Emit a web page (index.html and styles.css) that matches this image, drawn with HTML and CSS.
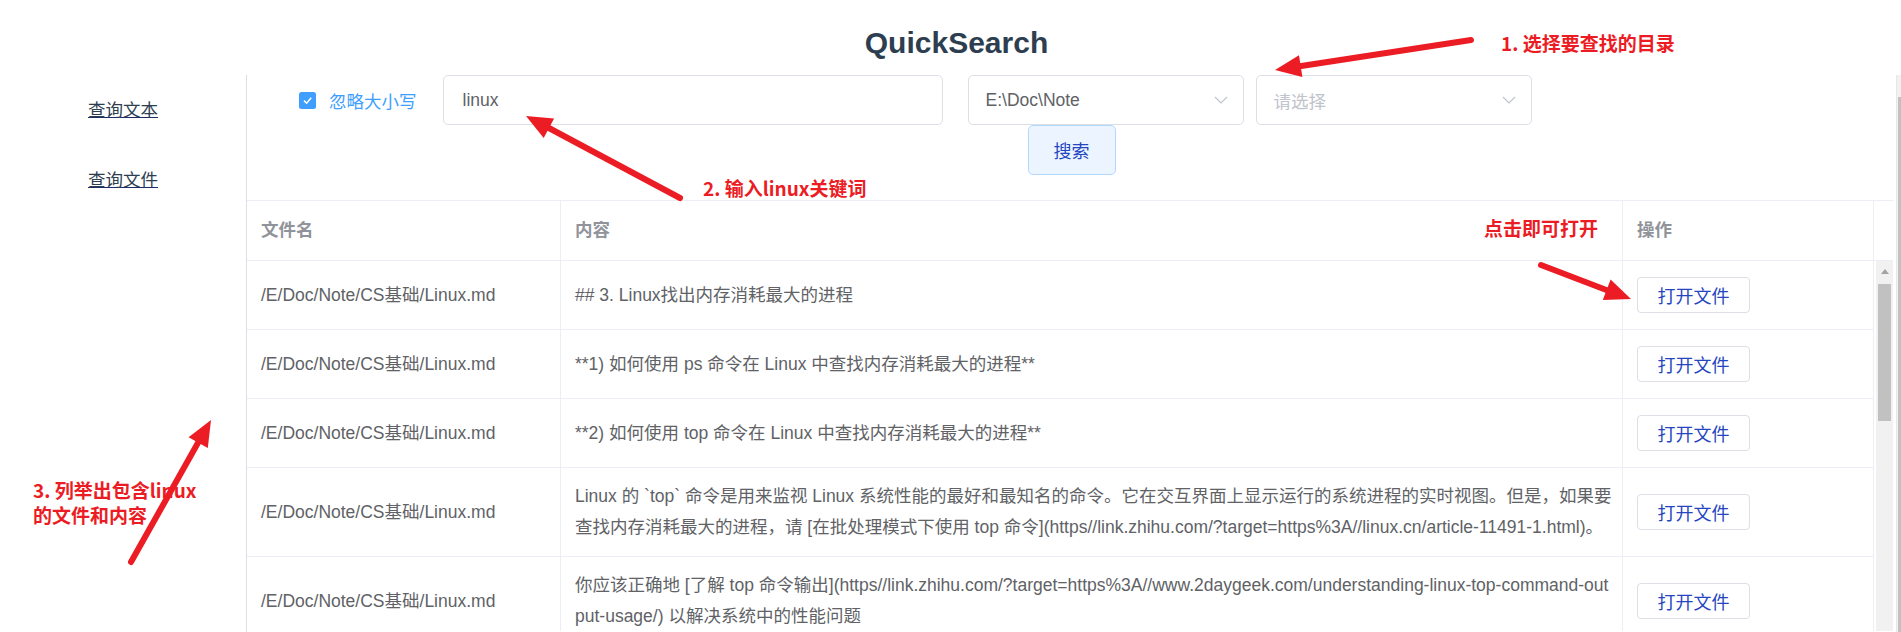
FILE: index.html
```html
<!DOCTYPE html>
<html lang="zh-CN">
<head>
<meta charset="utf-8">
<title>QuickSearch</title>
<link rel="stylesheet" href="styles.css">
</head>
<body>
<h1 class="title">QuickSearch</h1>
<div class="layout">
  <nav class="sidebar">
    <a class="nav-link" href="#">查询文本</a>
    <a class="nav-link" href="#">查询文件</a>
  </nav>
  <main class="main">
    <div class="toolbar">
      <label class="check">
        <span class="check-box"><svg width="17" height="17" viewBox="0 0 17 17"><rect x="0" y="0" width="17" height="17" rx="2.5" fill="#409eff"/><polyline points="5,8.6 7.6,11.2 12.2,5.8" fill="none" stroke="#fff" stroke-width="1.5"/></svg></span>
        <span class="check-label">忽略大小写</span>
      </label>
      <div class="input">linux</div>
      <div class="select"><span class="select-value">E:\Doc\Note</span><svg class="chevron" width="14" height="8" viewBox="0 0 14 8"><polyline points="1,1 7,7 13,1" fill="none" stroke="#c0c4cc" stroke-width="1.2"/></svg></div>
      <div class="select select-empty"><span class="select-placeholder">请选择</span><svg class="chevron" width="14" height="8" viewBox="0 0 14 8"><polyline points="1,1 7,7 13,1" fill="none" stroke="#c0c4cc" stroke-width="1.2"/></svg></div>
    </div>
    <div class="search-row"><button class="btn-search">搜索</button></div>
    <div class="table">
      <div class="thead">
        <div class="th">文件名</div>
        <div class="th">内容</div>
        <div class="th">操作</div>
        <div class="th gutter"></div>
      </div>
      <div class="tbody-wrap">
        <div class="tbody">
          <div class="tr">
            <div class="td">/E/Doc/Note/CS基础/Linux.md</div>
            <div class="td td-content">## 3. Linux找出内存消耗最大的进程</div>
            <div class="td"><button class="btn-open">打开文件</button></div>
          </div>
          <div class="tr">
            <div class="td">/E/Doc/Note/CS基础/Linux.md</div>
            <div class="td td-content">**1) 如何使用 ps 命令在 Linux 中查找内存消耗最大的进程**</div>
            <div class="td"><button class="btn-open">打开文件</button></div>
          </div>
          <div class="tr">
            <div class="td">/E/Doc/Note/CS基础/Linux.md</div>
            <div class="td td-content">**2) 如何使用 top 命令在 Linux 中查找内存消耗最大的进程**</div>
            <div class="td"><button class="btn-open">打开文件</button></div>
          </div>
          <div class="tr">
            <div class="td">/E/Doc/Note/CS基础/Linux.md</div>
            <div class="td td-content">Linux 的 `top` 命令是用来监视 Linux 系统性能的最好和最知名的命令。它在交互界面上显示运行的系统进程的实时视图。但是，如果要查找内存消耗最大的进程，请 [在批处理模式下使用 top 命令](https//link.zhihu.com/?target=https%3A//linux.cn/article-11491-1.html)。</div>
            <div class="td"><button class="btn-open">打开文件</button></div>
          </div>
          <div class="tr">
            <div class="td">/E/Doc/Note/CS基础/Linux.md</div>
            <div class="td td-content">你应该正确地 [了解 top 命令输出](https//link.zhihu.com/?target=https%3A//www.2daygeek.com/understanding-linux-top-command-output-usage/) 以解决系统中的性能问题</div>
            <div class="td"><button class="btn-open">打开文件</button></div>
          </div>
        </div>
        <div class="scrollbar">
          <div class="scroll-arrow"></div>
          <div class="scroll-thumb"></div>
        </div>
      </div>
    </div>
  </main>
  <div class="page-scroll"><div class="page-thumb"></div></div>
</div>

<svg class="arrows" width="1901" height="632" viewBox="0 0 1901 632">
  <g stroke="#ec1c24" stroke-width="6" stroke-linecap="round" fill="none">
    <line x1="1471" y1="40" x2="1298" y2="66.5"/>
    <line x1="680" y1="198" x2="547" y2="127"/>
    <line x1="1541" y1="265" x2="1609" y2="291"/>
    <line x1="131" y1="562" x2="199" y2="441"/>
  </g>
  <g fill="#ec1c24">
    <polygon points="1275,70 1299,55.2 1302.4,77"/>
    <polygon points="526,116 554.1,118.5 543.7,137.9"/>
    <polygon points="1631,299 1602.8,300.1 1610.6,279.5"/>
    <polygon points="211,420 207.8,448.1 188.6,437.3"/>
  </g>
</svg>
<div class="annot annot-1">1. 选择要查找的目录</div>
<div class="annot annot-2">2. 输入linux关键词</div>
<div class="annot annot-3">点击即可打开</div>
<div class="annot annot-4">3. 列举出包含linux<br>的文件和内容</div>
</body>
</html>
```

FILE: styles.css
```css
* { box-sizing: border-box; }

body {
  margin: 0;
  width: 1901px;
  height: 632px;
  overflow: hidden;
  position: relative;
  background: #fff;
  font-family: "Liberation Sans", "Noto Sans CJK SC", sans-serif;
  color: #2c3e50;
}

.title {
  margin: 25px 0 15px;
  padding-left: 12px;
  text-align: center;
  font-size: 30px;
  line-height: 35px;
  font-weight: 700;
  color: #2c3e50;
}

.layout {
  display: flex;
  height: 557px;
}

.sidebar {
  width: 247px;
  flex: none;
  border-right: 1px solid #dcdfe6;
  display: flex;
  flex-direction: column;
  align-items: center;
  padding-top: 23px;
  gap: 45px;
}

.nav-link {
  font-size: 17.5px;
  line-height: 25px;
  color: #2c3e50;
  text-decoration: underline;
  text-decoration-color: #1c2b6b;
}

.main {
  flex: 1;
  min-width: 0;
  display: flex;
  flex-direction: column;
}

.page-scroll {
  width: 5px;
  flex: none;
  border-left: 1px solid #e4e7ed;
  background: #f1f1f1;
  padding-top: 22px;
}

.page-thumb {
  height: 100%;
  background: #c1c1c1;
  margin-left: 1px;
}

.toolbar {
  display: flex;
  align-items: center;
  height: 50px;
  padding-left: 52px;
}

.check {
  display: flex;
  align-items: center;
  gap: 13px;
  margin-right: 26px;
}

.check-box { display: flex; }

.check-label {
  font-size: 17.5px;
  color: #409eff;
}

.input {
  width: 500px;
  height: 50px;
  border: 1px solid #dcdfe6;
  border-radius: 5px;
  padding: 0 19px;
  display: flex;
  align-items: center;
  font-size: 17.5px;
  color: #606266;
  margin-right: 25px;
}

.select {
  width: 276px;
  height: 50px;
  border: 1px solid #dcdfe6;
  border-radius: 5px;
  padding: 0 15px 0 17px;
  display: flex;
  align-items: center;
  justify-content: space-between;
  font-size: 17.5px;
  color: #606266;
  margin-right: 12px;
}

.select-placeholder { color: #c0c4cc; }

.search-row {
  display: flex;
  justify-content: center;
  margin-bottom: 25px;
}

.btn-search {
  width: 88px;
  height: 50px;
  background: #ecf5ff;
  border: 1px solid #b3d8ff;
  border-radius: 5px;
  font-family: "Liberation Sans", "Noto Sans CJK SC", sans-serif;
  font-size: 18px;
  color: #2546c0;
  padding: 0;
}

.table {
  width: 1646px;
  border-top: 1px solid #ebeef5;
}

.thead {
  display: grid;
  grid-template-columns: 314px 1062px 251px 19px;
}

.th {
  padding: 14px 14px;
  line-height: 31px;
  font-size: 17.5px;
  font-weight: 700;
  color: #909399;
  border-right: 1px solid #ebeef5;
  border-bottom: 1px solid #ebeef5;
}

.th.gutter { border-right: none; padding: 0; }

.tbody-wrap {
  display: flex;
  height: 370px;
  overflow: hidden;
}

.tbody {
  width: 1627px;
  flex: none;
}

.tr {
  display: grid;
  grid-template-columns: 314px 1062px 251px;
}

.td {
  padding: 13px 14px;
  line-height: 31px;
  font-size: 17.5px;
  color: #606266;
  border-right: 1px solid #ebeef5;
  border-bottom: 1px solid #ebeef5;
  display: flex;
  align-items: center;
  word-break: break-all;
}

.td-content {
  padding-right: 7px;
}

.btn-open {
  width: 113px;
  height: 36px;
  margin: 3px 0;
  background: #fff;
  border: 1px solid #dcdfe6;
  border-radius: 4px;
  font-family: "Liberation Sans", "Noto Sans CJK SC", sans-serif;
  font-size: 18px;
  color: #2546c0;
  padding: 0;
}

.scrollbar {
  width: 17px;
  margin-left: 2px;
  background: #f1f1f1;
  display: flex;
  flex-direction: column;
  align-items: center;
}

.scroll-arrow {
  margin-top: 8px;
  width: 0;
  height: 0;
  border-left: 4px solid transparent;
  border-right: 4px solid transparent;
  border-bottom: 5px solid #a3a3a3;
}

.scroll-thumb {
  margin-top: 10px;
  width: 13px;
  height: 137px;
  background: #c1c1c1;
}

.arrows {
  position: absolute;
  left: 0;
  top: 0;
  pointer-events: none;
}

.annot {
  position: absolute;
  font-family: "Noto Sans CJK SC", sans-serif;
  font-weight: 700;
  font-size: 19px;
  line-height: 25px;
  color: #ec1c24;
  white-space: nowrap;
}

.annot-1 { left: 1501px; top: 30px; }
.annot-2 { left: 703px; top: 175px; }
.annot-3 { left: 1484px; top: 215px; }
.annot-4 { left: 33px; top: 477px; }
```
